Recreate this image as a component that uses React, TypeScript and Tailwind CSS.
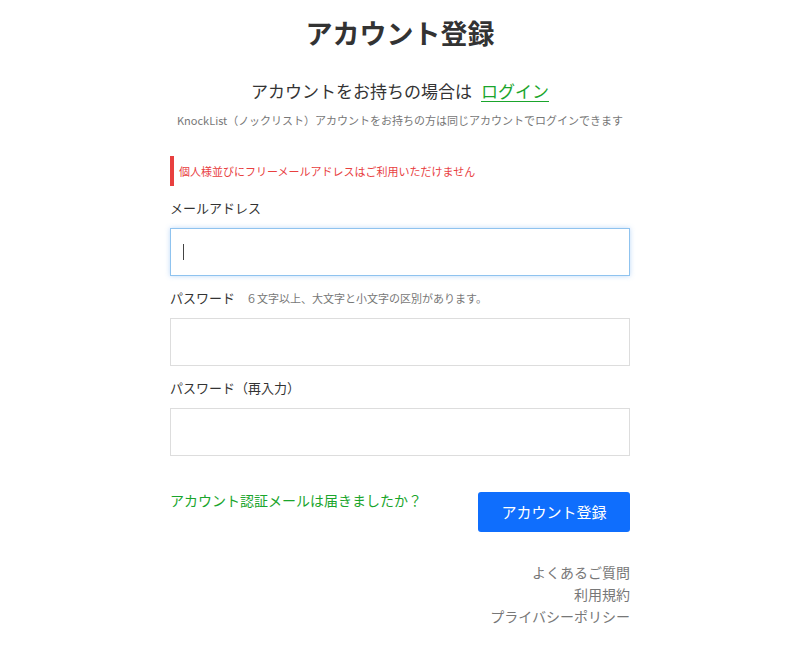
import React from "react";

const font = { fontFamily: '"Noto Sans CJK JP", "Noto Sans", sans-serif' };

function Field({ label, hint, focused }: { label: string; hint?: string; focused?: boolean }) {
  return (
    <>
      <div className="mt-[12px] flex items-center leading-[20px]">
        <span className="text-[13px] text-[#333]">{label}</span>
        {hint && <span className="ml-[11px] text-[11px] text-[#777]">{hint}</span>}
      </div>
      {focused ? (
        <div className="mt-[10px] flex h-[48px] items-center border border-[#8fc3ef] bg-white pl-[12px] shadow-[0_0_5px_rgba(110,170,240,0.45)]">
          <span className="h-[16px] w-px bg-[#444]" />
        </div>
      ) : (
        <input
          type="password"
          className="mt-[10px] block h-[48px] w-full border border-[#dddddd] bg-white px-3 outline-none"
        />
      )}
    </>
  );
}

export default function App() {
  return (
    <div className="min-h-[647px] w-full bg-white" style={font}>
      <div className="mx-auto flex w-[460px] flex-col">
        <h1 className="mt-[13px] text-center text-[27px] font-bold leading-[40px] text-[#333]">
          アカウント登録
        </h1>
        <p className="mt-[26px] text-center text-[17px] leading-[24px] text-[#333]">
          アカウントをお持ちの場合は
          <a href="#" className="ml-[9px] text-[#1aa52c] underline underline-offset-[3px]">
            ログイン
          </a>
        </p>
        <p className="mt-[8px] text-center text-[11px] leading-[18px] text-[#777]">
          KnockList（ノックリスト）アカウントをお持ちの方は同じアカウントでログインできます
        </p>

        <div className="mt-[27px] flex h-[30px] items-center border-l-4 border-[#e8403f] pl-[5px] text-[11px] text-[#e8403f]">
          個人様並びにフリーメールアドレスはご利用いただけません
        </div>

        <Field label="メールアドレス" focused />
        <Field label="パスワード" hint="６文字以上、大文字と小文字の区別があります。" />
        <Field label="パスワード（再入力）" />

        <div className="mt-[34px] flex items-start justify-between">
          <a href="#" className="text-[14px] leading-[20px] text-[#1aa52c]">
            アカウント認証メールは届きましたか？
          </a>
          <button className="mt-[2px] h-[40px] w-[152px] rounded-[3px] bg-[#0f6efd] text-[15px] text-white">
            アカウント登録
          </button>
        </div>

        <div className="mt-[29px] flex flex-col items-end text-[14px] leading-[22px] text-[#777]">
          <a href="#">よくあるご質問</a>
          <a href="#">利用規約</a>
          <a href="#">プライバシーポリシー</a>
        </div>
      </div>
    </div>
  );
}
